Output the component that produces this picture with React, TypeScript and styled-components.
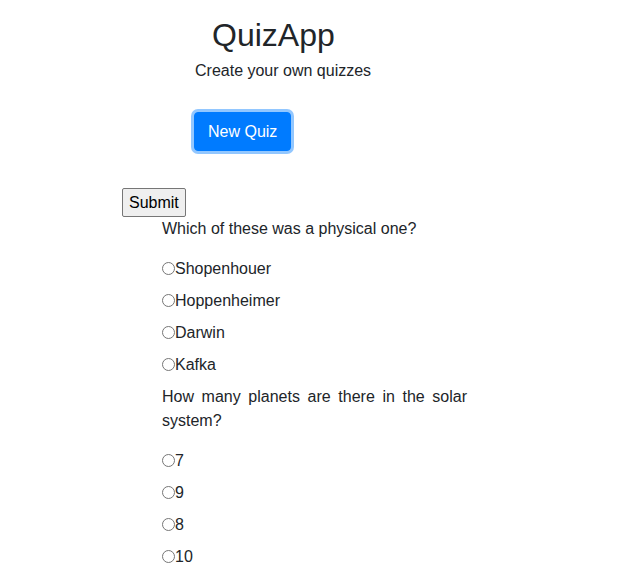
import * as React from "react";
import styled, { createGlobalStyle } from "styled-components";

const GlobalStyle = createGlobalStyle`
  body {
    margin: 0;
    font-family: "Liberation Sans", Arial, sans-serif;
    font-size: 16px;
    line-height: 1.5;
    color: #212529;
    background: #fff;
  }
`;

const Header = styled.header`
  display: flex;
  flex-direction: column;
  align-items: flex-start;
  padding: 16px 0 0 194px;
`;

const Title = styled.h1`
  margin: 0 0 5px 18px;
  font-size: 32px;
  font-weight: 400;
  line-height: 1.2;
`;

const Subtitle = styled.p`
  margin: 0 0 0 1px;
`;

const NewQuizButton = styled.button`
  margin-top: 29px;
  padding: 6.5px 13px;
  border: 1px solid #007bff;
  border-radius: 4px;
  background: #007bff;
  color: #fff;
  font-family: inherit;
  font-size: 16px;
  line-height: 24px;
  box-shadow: 0 0 0 3px rgba(38, 143, 255, 0.5);
  cursor: pointer;
`;

const QuizForm = styled.form`
  margin-top: 37px;
  padding-left: 122px;
`;

const SubmitButton = styled.button`
  display: block;
  box-sizing: border-box;
  height: 29px;
  padding: 0 6px 1px;
  border: 1px solid #767676;
  border-radius: 2px;
  background: #efefef;
  color: #000;
  font-family: inherit;
  font-size: 16px;
  line-height: 25px;
`;

const Questions = styled.div`
  width: 305px;
  margin-left: 40px;
`;

const QuestionText = styled.p`
  margin: 0 0 16px;
  text-align: justify;
`;

const Option = styled.label`
  display: flex;
  align-items: center;
  height: 24px;
  margin-bottom: 8px;
`;

const Radio = styled.input`
  appearance: none;
  box-sizing: border-box;
  width: 13px;
  height: 13px;
  margin: 0 0 2px;
  border: 1px solid #767676;
  border-radius: 50%;
  background: #fff;
`;

interface IQuestion {
  id: string;
  text: string;
  answers: string[];
}

const questions: IQuestion[] = [
  {
    id: "q1",
    text: "Which of these was a physical one?",
    answers: ["Shopenhouer", "Hoppenheimer", "Darwin", "Kafka"],
  },
  {
    id: "q2",
    text: "How many planets are there in the solar system?",
    answers: ["7", "9", "8", "10"],
  },
];

const App = () => {
  const [picked, setPicked] = React.useState<Record<string, string>>({});

  return (
    <>
      <GlobalStyle />
      <Header>
        <Title>QuizApp</Title>
        <Subtitle>Create your own quizzes</Subtitle>
        <NewQuizButton type="button">New Quiz</NewQuizButton>
      </Header>
      <QuizForm onSubmit={(e) => e.preventDefault()}>
        <SubmitButton type="submit">Submit</SubmitButton>
        <Questions>
          {questions.map((q) => (
            <div key={q.id}>
              <QuestionText>{q.text}</QuestionText>
              {q.answers.map((a) => (
                <Option key={a}>
                  <Radio
                    type="radio"
                    name={q.id}
                    value={a}
                    checked={picked[q.id] === a}
                    onChange={() => setPicked({ ...picked, [q.id]: a })}
                  />
                  {a}
                </Option>
              ))}
            </div>
          ))}
        </Questions>
      </QuizForm>
    </>
  );
};

export default App;
